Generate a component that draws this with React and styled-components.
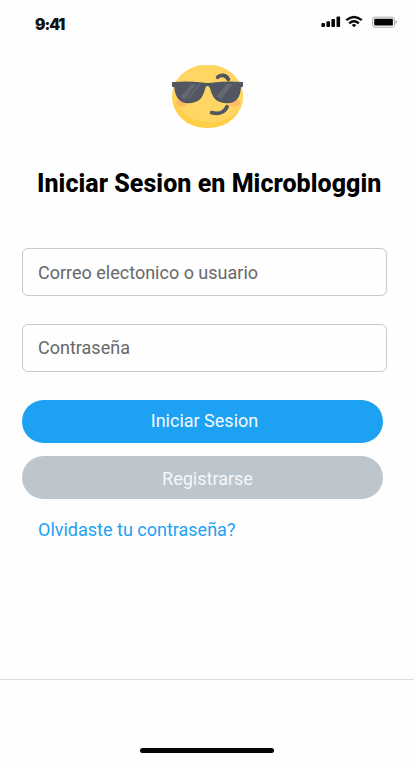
import React from "react";
import styled, { createGlobalStyle } from "styled-components";

const GlobalStyle = createGlobalStyle`
  * { box-sizing: border-box; }
  body { margin: 0; background: #fff; }
`;

const Screen = styled.div`
  width: 414px;
  height: 762px;
  display: flex;
  flex-direction: column;
  overflow: hidden;
  background: #fefefe;
  font-family: Roboto, sans-serif;
`;

const StatusBar = styled.header`
  height: 48px;
  flex: none;
  display: flex;
  justify-content: space-between;
  align-items: flex-start;
  padding: 15px 17px 0 35px;
`;

const Clock = styled.time`
  font: 900 15.5px/20px Inter, sans-serif;
  letter-spacing: -1px;
  color: #111;
`;

const StatusIcons = styled.svg`
  display: block;
  flex: none;
`;

const Main = styled.main`
  flex: 1;
  display: flex;
  flex-direction: column;
  padding: 17px 22px 0;
`;

const Emoji = styled.svg`
  display: block;
  flex: none;
  margin-left: 150px;
`;

const Title = styled.h1`
  margin: 40px 0 0 15px;
  font-size: 25px;
  line-height: 32px;
  font-weight: 800;
  letter-spacing: 0.05px;
  white-space: nowrap;
  color: #000;
`;

const Form = styled.form`
  margin-top: 48px;
  display: flex;
  flex-direction: column;
`;

const Field = styled.label`
  width: 365px;
  height: 48px;
  margin-bottom: 28px;
  padding: 0 15px ${(p) => p.$lift || 0}px;
  display: flex;
  align-items: center;
  border: 1px solid #c9c9c9;
  border-radius: 6px;
  font-size: 18px;
  color: #686868;
`;

const Button = styled.button`
  width: 361px;
  height: 43px;
  margin: 0 0 13px;
  padding: ${(p) => p.$pad};
  border: 0;
  border-radius: 22px;
  background: ${(p) => p.$bg};
  color: ${(p) => p.$color};
  font: 400 18px/21px Roboto, sans-serif;
  text-align: center;
`;

const ForgotLink = styled.a`
  margin: 7px 0 0 16px;
  font-size: 18px;
  line-height: 22px;
  color: #1da1f2;
`;

const Footer = styled.footer`
  height: 83px;
  flex: none;
  display: flex;
  justify-content: center;
  align-items: flex-end;
  padding-bottom: 9px;
  border-top: 1px solid #d9dbdd;
`;

const HomeIndicator = styled.div`
  width: 134px;
  height: 5px;
  border-radius: 3px;
  background: #050505;
`;

function CoolFace() {
  return (
    <Emoji width="71" height="63" viewBox="36 30 213 189" aria-hidden="true">
      <defs>
        <clipPath id="face">
          <rect x="36" y="30" width="213" height="189" rx="101" ry="94.5" />
        </clipPath>
      </defs>
      <g clipPath="url(#face)">
        <rect x="36" y="30" width="213" height="189" fill="#ffcf48" />
        <ellipse cx="150" cy="108" rx="111" ry="94" fill="#ffd564" />
        <ellipse cx="66" cy="143" rx="18" ry="12" fill="#ffbb62" />
        <ellipse cx="223" cy="143" rx="18" ry="12" fill="#ffbb62" />
      </g>
      <path
        d="M36 81Q87 77 120 82Q143 86 166 82Q199 77 249 81V95L243 97Q240 145 202 145C171 145 158 130 151 103Q148 93 143 93Q137 93 135 103C128 131 115 145 84 145Q47 144 43 97L36 95Z"
        fill="#525660"
      />
      <path d="M94 87H109L76 131Q68 131 61 127ZM115 87H122L88 131H82ZM201 87H218L184 132Q174 129 170 124Z" fill="#646973" />
      <path d="M173 67C181 58 198 59 205 73" fill="none" stroke="#525660" strokeWidth="11.5" strokeLinecap="round" />
      <path d="M155 173C175 178 193 173 201 155" fill="none" stroke="#525660" strokeWidth="11.5" strokeLinecap="round" />
    </Emoji>
  );
}

function SystemStatus() {
  return (
    <StatusIcons width="76" height="14" viewBox="0 0 76 14" aria-hidden="true">
      <g fill="#080808">
        <rect x="0.4" y="8" width="3.6" height="4.1" rx="1" />
        <rect x="5.4" y="6.2" width="3.6" height="5.9" rx="1" />
        <rect x="10.4" y="4" width="3.6" height="8.1" rx="1" />
        <rect x="15.5" y="1.6" width="3.6" height="10.5" rx="1" />
      </g>
      <g fill="none" stroke="#080808" strokeWidth="2.4">
        <path d="M25.3 5.2Q33 -1.4 40.8 5.2" />
        <path d="M28.2 8.3Q33 4.1 37.9 8.3" />
      </g>
      <path d="M30.7 9.9Q33 8.1 35.3 9.9L33 12.3Z" fill="#080808" />
      <rect x="51.6" y="2.2" width="21.8" height="10" rx="2.4" fill="none" stroke="#aaa" />
      <rect x="53.2" y="3.8" width="18.7" height="6.8" rx="1" fill="#050505" />
      <path d="M74.5 5.2Q76 5.7 76 7T74.5 9Z" fill="#aaa" />
    </StatusIcons>
  );
}

export default function App() {
  return (
    <>
      <GlobalStyle />
      <Screen>
        <StatusBar>
          <Clock>9:41</Clock>
          <SystemStatus />
        </StatusBar>
        <Main>
          <CoolFace />
          <Title>Iniciar Sesion en Microbloggin</Title>
          <Form>
            <Field>Correo electonico o usuario</Field>
            <Field $lift={2}>Contraseña</Field>
            <Button type="button" $bg="#1da1f2" $color="#f4faff" $pad="10px 0 12px 4px">
              Iniciar Sesion
            </Button>
            <Button type="button" $bg="#bdc5cd" $color="#f7f8f9" $pad="12px 0 10px 10px">
              Registrarse
            </Button>
            <ForgotLink>Olvidaste tu contraseña?</ForgotLink>
          </Form>
        </Main>
        <Footer>
          <HomeIndicator />
        </Footer>
      </Screen>
    </>
  );
}
